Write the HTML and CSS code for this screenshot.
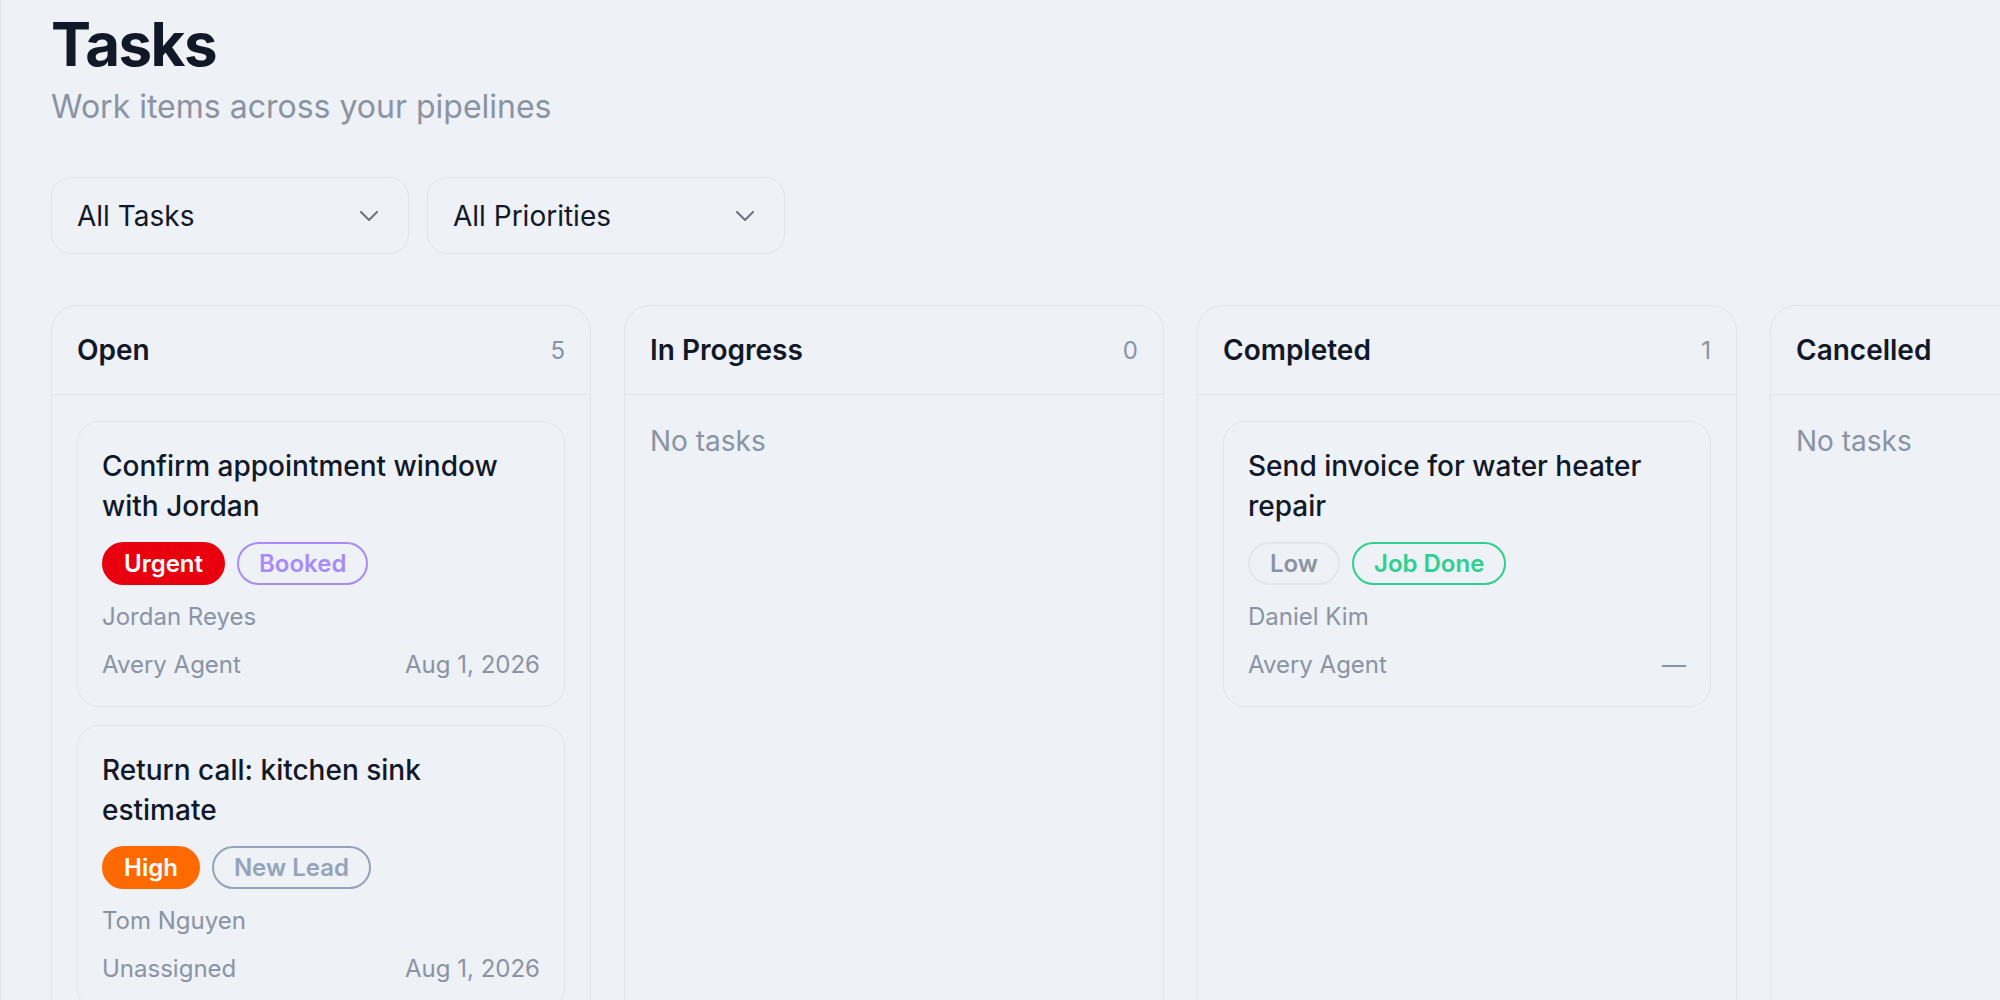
FILE: index.html
```html
<!DOCTYPE html>
<html lang="en">
<head>
    <meta charset="UTF-8">
    <meta name="viewport" content="width=device-width, initial-scale=1.0">
    <title>Tasks</title>
    <link rel="stylesheet" href="styles.css">
</head>
<body>
   <main class="main">
      <header class="page-head">
         <h1>Tasks</h1>
         <p class="subtitle">Work items across your pipelines</p>
      </header>

      <div class="filters">
         <div class="select">
            <span>All Tasks</span>
            <svg width="18" height="10" viewBox="0 0 18 10"><path d="M1 1l8 8 8-8" fill="none" stroke="#6b7280" stroke-width="2" stroke-linecap="round" stroke-linejoin="round"/></svg>
         </div>
         <div class="select">
            <span>All Priorities</span>
            <svg width="18" height="10" viewBox="0 0 18 10"><path d="M1 1l8 8 8-8" fill="none" stroke="#6b7280" stroke-width="2" stroke-linecap="round" stroke-linejoin="round"/></svg>
         </div>
      </div>

      <div class="board">
         <section class="column">
            <div class="column-head">
               <h2>Open</h2>
               <span class="count">5</span>
            </div>
            <div class="column-body">
               <div class="card">
                  <h3>Confirm appointment window with Jordan</h3>
                  <div class="tags">
                     <span class="tag urgent">Urgent</span>
                     <span class="tag booked">Booked</span>
                  </div>
                  <div class="contact">Jordan Reyes</div>
                  <div class="meta">
                     <span>Avery Agent</span>
                     <span>Aug 1, 2026</span>
                  </div>
               </div>
               <div class="card">
                  <h3>Return call: kitchen sink estimate</h3>
                  <div class="tags">
                     <span class="tag high">High</span>
                     <span class="tag new-lead">New Lead</span>
                  </div>
                  <div class="contact">Tom Nguyen</div>
                  <div class="meta">
                     <span>Unassigned</span>
                     <span>Aug 1, 2026</span>
                  </div>
               </div>
            </div>
         </section>

         <section class="column">
            <div class="column-head">
               <h2>In Progress</h2>
               <span class="count">0</span>
            </div>
            <div class="column-body">
               <p class="empty">No tasks</p>
            </div>
         </section>

         <section class="column">
            <div class="column-head">
               <h2>Completed</h2>
               <span class="count">1</span>
            </div>
            <div class="column-body">
               <div class="card">
                  <h3>Send invoice for water heater repair</h3>
                  <div class="tags">
                     <span class="tag low">Low</span>
                     <span class="tag job-done">Job Done</span>
                  </div>
                  <div class="contact">Daniel Kim</div>
                  <div class="meta">
                     <span>Avery Agent</span>
                     <span>&mdash;</span>
                  </div>
               </div>
            </div>
         </section>

         <section class="column">
            <div class="column-head">
               <h2>Cancelled</h2>
               <span class="count">0</span>
            </div>
            <div class="column-body">
               <p class="empty">No tasks</p>
            </div>
         </section>
      </div>
   </main>
</body>
</html>
```

FILE: styles.css
```css
body {
    font-family: 'Inter', 'Noto Sans', sans-serif;
    background-color: #eef1f6;
    color: #111827;
    margin: 0;
    padding: 0;
    height: 100vh;
    overflow: hidden;
}

.main {
    border-left: 1px solid #e1e5eb;
    padding: 8px 0 0 50px;
    min-height: 100vh;
    box-sizing: border-box;
}

h1 {
    font-size: 60px;
    font-weight: 700;
    line-height: 72px;
    letter-spacing: -0.025em;
    margin: 0;
}

.subtitle {
    font-size: 32px;
    line-height: 40px;
    color: #8a93a3;
    margin: 7px 0 0;
}

/* filter dropdowns */
.filters {
    display: flex;
    gap: 18px;
    margin-top: 50px;
}

.select {
    width: 358px;
    height: 77px;
    box-sizing: border-box;
    border: 1px solid #e1e5eb;
    border-radius: 20px;
    padding: 0 30px 0 25px;
    display: flex;
    align-items: center;
    justify-content: space-between;
    font-size: 28px;
}

/* kanban board */
.board {
    display: flex;
    gap: 33px;
    margin-top: 51px;
}

.column {
    flex: 0 0 540px;
    box-sizing: border-box;
    border: 1px solid #e1e5eb;
    border-radius: 26px;
    min-height: 800px;
}

.column-head {
    display: flex;
    justify-content: space-between;
    align-items: center;
    padding: 24px 25px;
    border-bottom: 1px solid #e1e5eb;
}

.column-head h2 {
    font-size: 28px;
    font-weight: 600;
    line-height: 40px;
    margin: 0;
}

.count {
    font-size: 24px;
    color: #8a93a3;
}

.column-body {
    padding: 26px 25px;
    display: flex;
    flex-direction: column;
    gap: 18px;
}

.empty {
    font-size: 28px;
    line-height: 40px;
    color: #8a93a3;
    margin: 0;
}

/* task cards */
.card {
    border: 1px solid #e1e5eb;
    border-radius: 22px;
    padding: 24px;
}

.card h3 {
    font-size: 28px;
    font-weight: 500;
    line-height: 40px;
    margin: 0;
}

.tags {
    display: flex;
    gap: 12px;
    margin-top: 16px;
}

.tag {
    font-size: 24px;
    font-weight: 600;
    line-height: 33px;
    padding: 3px 20px;
    border: 2px solid transparent;
    border-radius: 999px;
}

.tag.urgent {
    background-color: #e8000f;
    border-color: #e8000f;
    color: #fff;
}

.tag.high {
    background-color: #ff6a00;
    border-color: #ff6a00;
    color: #fff;
}

.tag.booked {
    border-color: #a78bfa;
    color: #a78bfa;
}

.tag.new-lead {
    border-color: #94a3b8;
    color: #94a3b8;
}

.tag.low {
    border-color: #e3e6eb;
    color: #8a93a3;
}

.tag.job-done {
    border-color: #2fcf8f;
    color: #2fcf8f;
}

.contact {
    font-size: 24px;
    line-height: 34px;
    color: #8a93a3;
    margin-top: 15px;
}

.meta {
    display: flex;
    justify-content: space-between;
    font-size: 24px;
    line-height: 34px;
    color: #8a93a3;
    margin-top: 14px;
}
```
